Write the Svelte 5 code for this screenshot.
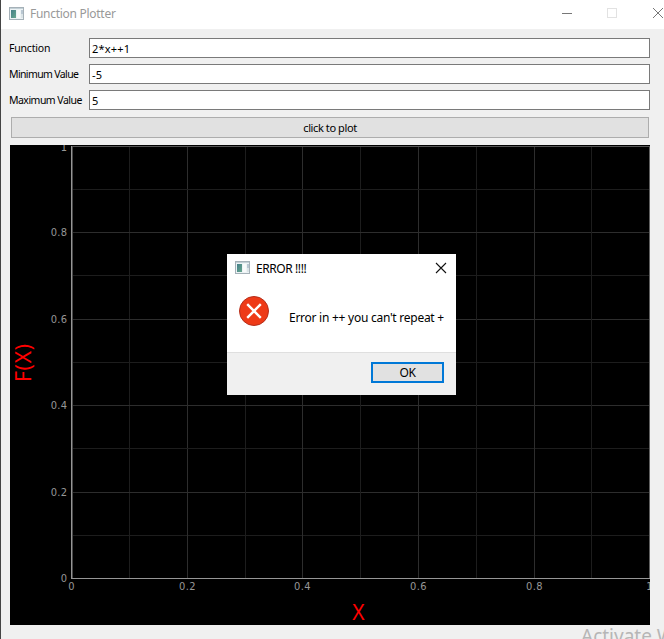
<script>
  const fields = [
    { label: 'Function', value: '2*x++1', spacing: -0.2 },
    { label: 'Minimum Value', value: '-5', spacing: -0.62 },
    { label: 'Maximum Value', value: '5', spacing: -0.52 }
  ];
  const ticks = Array.from({ length: 11 }, (_, i) => i);
  const gx = (i) => Math.round(61.2 + i * 57.8) + 0.5;
  const gy = (i) => Math.round(432.9 - i * 43.2) + 0.5;
  const label = (i) => String(i / 10);
</script>

{#snippet appIcon()}
  <svg class="app-icon" width="15" height="13" viewBox="0 0 15 13">
    <rect x="0.5" y="0.5" width="14" height="12" fill="#edf3f5" stroke="#a5b1b8" />
    <rect x="1" y="1" width="13" height="1" fill="#c3d0d6" />
    <defs>
      <linearGradient id="pane" x1="0" y1="0" x2="1" y2="1">
        <stop offset="0" stop-color="#457f88" />
        <stop offset="1" stop-color="#68a88f" />
      </linearGradient>
    </defs>
    <rect x="2" y="3" width="5" height="8" fill="url(#pane)" />
    <rect x="8" y="3" width="3" height="8" fill="#f8fafa" />
    <rect x="12" y="3" width="2" height="4" fill="#b9c7d2" />
    <rect x="12" y="7" width="2" height="4" fill="#dbe4e7" />
  </svg>
{/snippet}

<main>
  <header class="titlebar">
    {@render appIcon()}
    <span class="title">Function Plotter</span>
    <svg class="controls" width="104" height="28" viewBox="0 0 104 28" fill="none">
      <path d="M2 13.5h10" stroke="#777" />
      <rect x="47.5" y="8.5" width="9" height="9" stroke="#e2e2e2" />
      <path d="M93 8l10 10M103 8l-10 10" stroke="#777" />
    </svg>
  </header>
  <section class="form">
    {#each fields as f}
      <label class="row">
        <span class="name" style="letter-spacing: {f.spacing}px">{f.label}</span>
        <span class="input">{f.value}</span>
      </label>
    {/each}
    <button class="plot-btn">click to plot</button>
  </section>
  <svg class="plot" width="640" height="480" viewBox="0 0 640 480">
    <rect width="640" height="480" fill="#000" />
    {#each ticks.slice(1) as i}
      <path d="M{i === 10 ? 639.5 : gx(i)} 1V433" stroke={i === 10 ? '#606060' : i % 2 ? '#1d1d1d' : '#2d2d2d'} />
      <path d="M62 {gy(i)}H640" stroke={i === 10 ? '#555' : i % 2 ? '#1d1d1d' : '#2d2d2d'} />
    {/each}
    <path d="M61.5 1V434" stroke="#969696" />
    <path d="M62.5 2V433" stroke="#4a4a4a" />
    <path d="M61 433.5H640" stroke="#969696" />
    <g class="tick">
      {#each ticks.filter((i) => i % 2 === 0) as i}
        <text x={gx(i)} y="445" text-anchor="middle">{label(i)}</text>
        <text x="57.5" y={i === 10 ? 6 : gy(i) + 3.5} text-anchor="end">{label(i)}</text>
      {/each}
    </g>
    <text class="axis" x="348.5" y="475" text-anchor="middle">X</text>
    <text class="axis" transform="translate(21 218) rotate(-90)" text-anchor="middle" textLength="38">F(X)</text>
  </svg>
  <div class="watermark">Activate Windows</div>

  <div class="dialog">
    <div class="dialog-title">
      {@render appIcon()}
      <span>ERROR !!!!</span>
      <svg class="close" width="12" height="12" viewBox="0 0 12 12"><path d="M1 1l10 10M11 1L1 11" stroke="#111" stroke-width="1.1" /></svg>
    </div>
    <div class="message">
      <svg width="32" height="32" viewBox="0 0 32 32">
        <circle cx="16" cy="16" r="14.5" fill="#ee3a17" stroke="#b52f1b" />
        <path d="M9.2 9.2l13.6 13.6M22.8 9.2L9.2 22.8" stroke="#fff" stroke-width="2.4" />
      </svg>
      <p>Error in ++ you can't repeat +</p>
    </div>
    <div class="actions"><button>OK</button></div>
  </div>
</main>

<style>
  :global(body) { margin: 0; }
  main {
    position: relative;
    box-sizing: border-box;
    width: 664px;
    height: 639px;
    overflow: hidden;
    background: #f0f0f0;
    border-left: 1px solid #454545;
    font-family: "Noto Sans", "Open Sans", sans-serif;
    font-size: 11px;
    color: #000;
  }
  .titlebar {
    display: flex;
    align-items: center;
    height: 28px;
    padding: 0 0 1px 8px;
    background: #fff;
    box-sizing: content-box;
  }
  .app-icon { display: block; flex: none; position: relative; top: -1px; }
  .title { position: relative; top: -1px; margin-left: 6px; color: #999; font-size: 12px; letter-spacing: -0.28px; white-space: nowrap; }
  .controls { margin-left: auto; }
  .form { display: flex; flex-direction: column; gap: 6px; padding: 9px 14px 0 8px; }
  .row { display: flex; height: 20px; }
  .name { width: 80px; font-size: 10.5px; line-height: 21px; white-space: nowrap; }
  .input {
    flex: 1;
    box-sizing: border-box;
    padding-left: 2px;
    border: 1px solid #7a7a7a;
    background: #fff;
    line-height: 20px;
    letter-spacing: 0.2px;
  }
  button { font: inherit; color: #000; padding: 0; }
  .plot-btn {
    height: 21px;
    margin: 1px 1px 0 2px;
    border: 1px solid #adadad;
    background: #e1e1e1;
    line-height: 19px;
    letter-spacing: -0.4px;
  }
  .plot { display: block; margin: 7px 0 0 9px; }
  .tick { fill: #969696; font: 11px "DejaVu Sans Condensed", "DejaVu Sans", sans-serif; letter-spacing: 0.35px; }
  .axis { fill: #f00; font-size: 21px; }
  .watermark {
    position: absolute;
    left: 580px;
    top: 624px;
    color: #b6b6b6;
    font-size: 19px;
    line-height: 24px;
    white-space: nowrap;
  }
  .dialog {
    position: absolute;
    left: 226px;
    top: 254px;
    display: flex;
    flex-direction: column;
    width: 229px;
    height: 141px;
    background: #fff;
    font-size: 12px;
  }
  .dialog-title { display: flex; align-items: center; height: 28px; padding: 0 9px 0 8px; }
  .dialog-title span { margin-left: 6px; letter-spacing: -0.42px; }
  .close { margin-left: auto; }
  .message { display: flex; height: 70px; padding: 13px 0 0 11px; box-sizing: border-box; }
  .message p { margin: 14px 0 0 19px; line-height: 17px; white-space: nowrap; letter-spacing: -0.26px; }
  .actions {
    flex: 1;
    display: flex;
    justify-content: flex-end;
    align-items: flex-start;
    padding: 9px 12px 0 0;
    border-top: 1px solid #dfdfdf;
    background: #f0f0f0;
  }
  .actions button {
    width: 73px;
    height: 21px;
    border: 2px solid #0078d7;
    background: #e1e1e1;
    line-height: 17px;
    letter-spacing: -0.3px;
  }
</style>
